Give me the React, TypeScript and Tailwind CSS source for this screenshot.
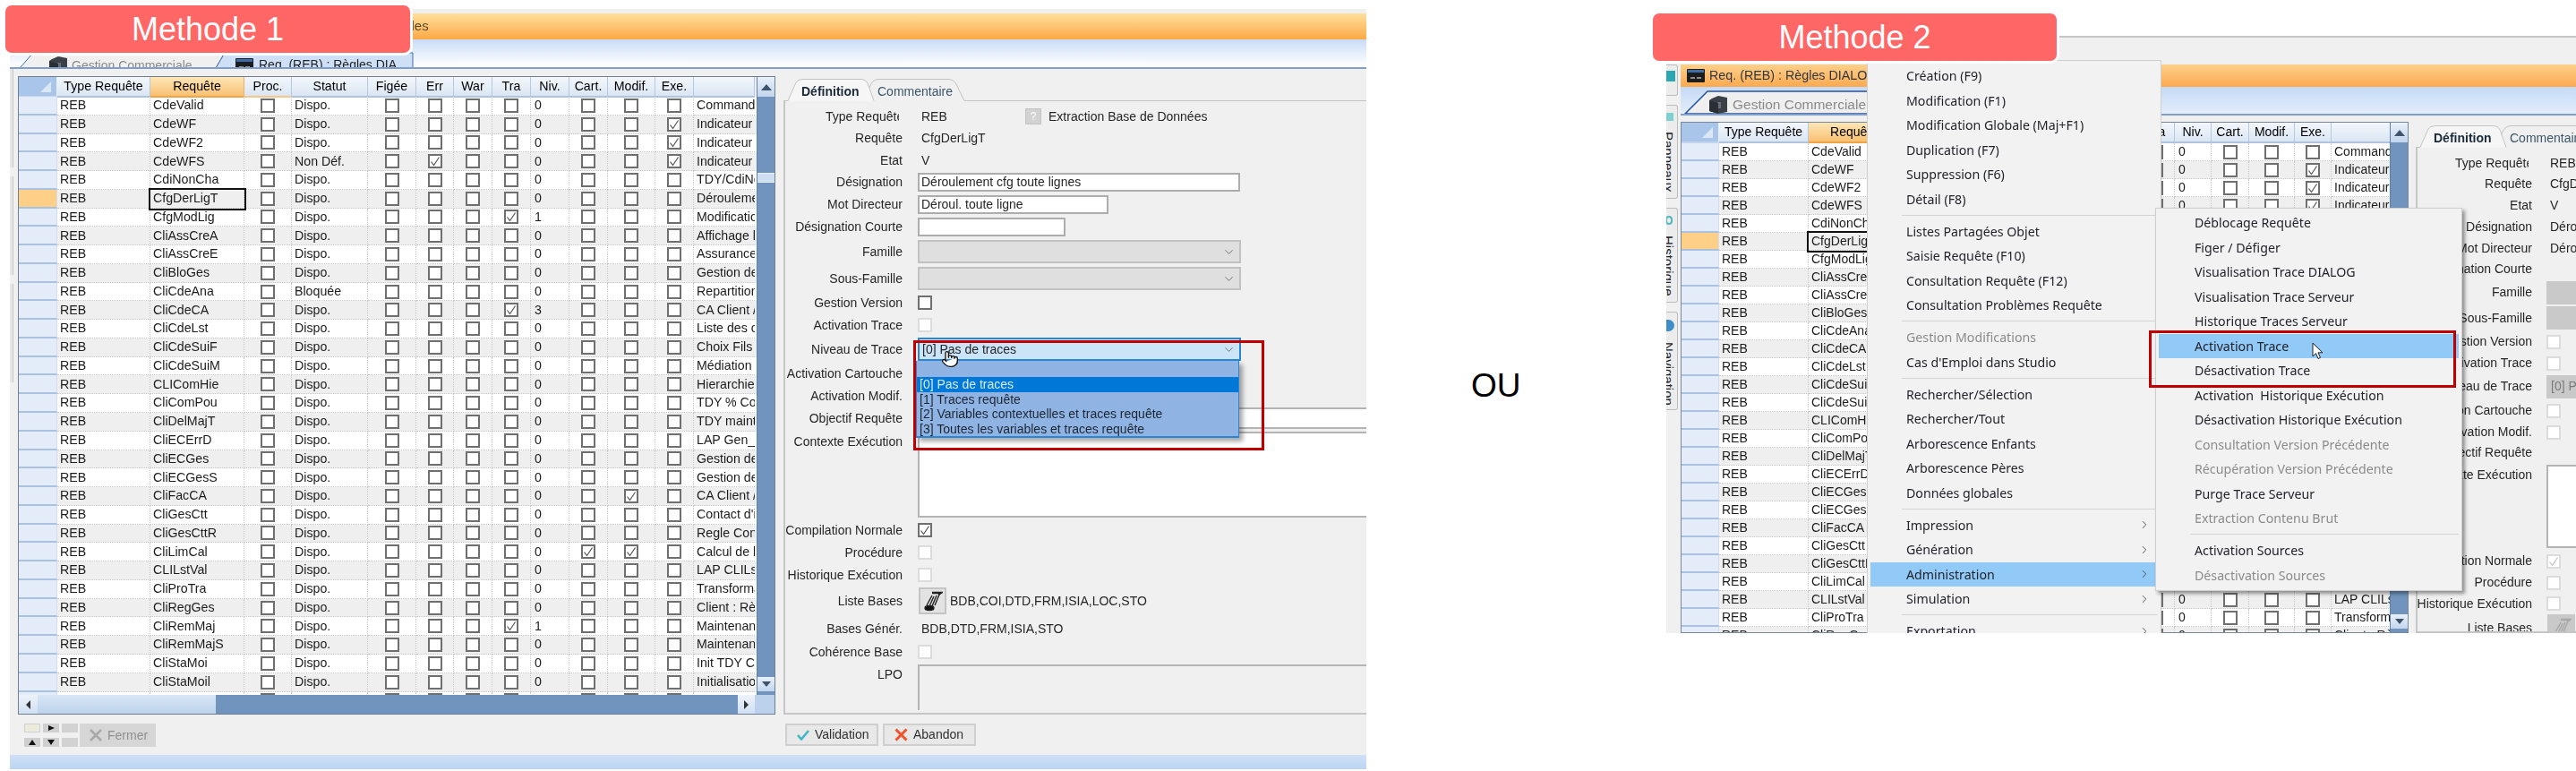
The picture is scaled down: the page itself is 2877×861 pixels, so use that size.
import React from "react";
import { ChevronDown, ChevronRight, Pointer } from "lucide-react";

const requetes = [
  ["CdeValid", "Commande"],
  ["CdeWF", "Indicateur"],
  ["CdeWF2", "Indicateur"],
  ["CdeWFS", "Indicateur"],
  ["CdiNonCha", "TDY/CdiNonCha"],
  ["CfgDerLigT", "Déroulement"],
  ["CfgModLig", "Modification"],
  ["CliAssCreA", "Affichage l"],
  ["CliAssCreE", "Assurance"],
  ["CliBloGes", "Gestion de"],
  ["CliCdeAna", "Repartition"],
  ["CliCdeCA", "CA Client /"],
  ["CliCdeLst", "Liste des c"],
  ["CliCdeSuiF", "Choix Fils l"],
  ["CliCdeSuiM", "Médiation"],
  ["CLIComHie", "Hierarchie"],
  ["CliComPou", "TDY % Co"],
  ["CliDelMajT", "TDY maint"],
  ["CliECErrD", "LAP Gen_"],
  ["CliECGes", "Gestion de"],
  ["CliECGesS", "Gestion de"],
  ["CliFacCA", "CA Client /"],
  ["CliGesCtt", "Contact d'i"],
  ["CliGesCttR", "Regle Con"],
  ["CliLimCal", "Calcul de l"],
  ["CLILstVal", "LAP CLILs"],
  ["CliProTra", "Transforma"],
  ["CliRegGes", "Client : Rè"],
  ["CliRemMaj", "Maintenan"],
  ["CliRemMajS", "Maintenan"],
  ["CliStaMoi", "Init TDY C"],
  ["CliStaMoil", "Initialisation"],
  ["", ""],
];

// flag columns ticked per request
const ticks: Record<string, string[]> = {
  CdeWF: ["exe"],
  CdeWF2: ["exe"],
  CdeWFS: ["err", "exe"],
  CfgModLig: ["tra"],
  CliCdeCA: ["tra"],
  CliFacCA: ["modif"],
  CliLimCal: ["cart", "modif"],
  CliRemMaj: ["tra"],
};
const niveaux: Record<string, string> = { CfgModLig: "1", CliCdeCA: "3", CliRemMaj: "1" };
const statuts: Record<string, string> = { CdeWFS: "Non Déf.", CliCdeAna: "Bloquée" };

const headers = ["Type Requête", "Requête", "Proc.", "Statut", "Figée", "Err", "War", "Tra", "Niv.", "Cart.", "Modif.", "Exe.", ""];

const cell = "border-r border-b border-dotted border-[#c9c9c9] overflow-hidden whitespace-nowrap flex items-center";

function Check({ on, faded }: { on?: boolean; faded?: boolean }) {
  return (
    <span className={`w-[16px] h-[16px] flex items-center justify-center bg-white border-2 shrink-0 ${faded ? "border-[#dcdcdc]" : "border-[#6f6f6f]"}`}>
      {on && (
        <svg width="12" height="12" viewBox="0 0 12 12" fill="none" stroke={faded ? "#c4c4c4" : "#555"} strokeWidth="1.2">
          <path d="M1.5 6.5 L4.5 10.5 L10.5 1.5" />
        </svg>
      )}
    </span>
  );
}

function CheckCell({ on }: { on?: boolean }) {
  return (
    <div className={`${cell} justify-center`}>
      <Check on={on} />
    </div>
  );
}

function VScroll({ thumb }: { thumb: string }) {
  return (
    <div className="w-[20px] bg-[#7094bd] flex flex-col border-l border-[#5c82ad]">
      <div className="h-[22px] bg-linear-to-b from-[#e8f0fa] to-[#c3d6ee] flex items-center justify-center">
        <div className="w-0 h-0 border-x-[6px] border-x-transparent border-b-[7px] border-b-[#3f536b]" />
      </div>
      <div className={`${thumb} h-[11px] bg-[#cfdff3] border-y border-[#e8f0fa]`} />
      <div className="flex-1" />
      <div className="h-[16px] mb-[4px] bg-linear-to-b from-[#e8f0fa] to-[#c3d6ee] flex items-center justify-center">
        <div className="w-0 h-0 border-x-[5px] border-x-transparent border-t-[6px] border-t-[#3f536b]" />
      </div>
    </div>
  );
}

function ReqGrid({ cols, rowH, headH, text, thumb }: { cols: string; rowH: string; headH: string; text: string; thumb: string }) {
  return (
    <div className="flex-1 min-h-0 flex overflow-hidden">
      <div className={`flex-1 min-w-0 overflow-hidden ${text}`}>
        <div className={`grid ${cols} ${headH}`}>
          <div className="bg-[#a9c6ea] border-r border-[#e6eef8] border-b-2 border-b-[#c3d5ec] flex items-end justify-end pr-[6px] pb-[4px]">
            <svg width="12" height="12" viewBox="0 0 12 12">
              <path d="M12 0 V12 H0 Z" fill="#dbe7f6" />
            </svg>
          </div>
          {headers.map((h, i) => (
            <div
              key={i}
              className={`flex items-center justify-center whitespace-nowrap border-r border-b-2 ${
                i === 1
                  ? "bg-linear-to-b from-[#fde6b6] to-[#f8c172] border-r-[#e7b36a] border-b-[#f0a445]"
                  : i === 2
                    ? "bg-linear-to-b from-[#f3f7fc] to-[#dbe6f3] border-r-[#b4c8df] border-b-[#f6c78a]"
                    : "bg-linear-to-b from-[#f3f7fc] to-[#dbe6f3] border-r-[#b4c8df] border-b-[#adc3de]"
              }`}
            >
              {h}
            </div>
          ))}
        </div>
        {requetes.map(([name, desc], i) => {
          const t = ticks[name] ?? [];
          const current = name === "CfgDerLigT";
          return (
            <div key={i} className={`grid ${cols} ${rowH} ${i % 2 ? "bg-[#efefef]" : "bg-white"} text-[#1c1c1c]`}>
              <div className={`border-r border-[#d3deec] border-b-2 border-b-[#a9c2df] ${current ? "bg-[#fdcf87]" : "bg-[#e3ecf8]"}`} />
              <div className={`${cell} pl-[3px]`}>{name && "REB"}</div>
              <div className={`${cell} pl-[3px] ${current ? "relative z-10 outline-2 outline-[#111] bg-transparent" : ""}`}>{name}</div>
              <CheckCell />
              <div className={`${cell} pl-[3px]`}>{name && (statuts[name] ?? "Dispo.")}</div>
              <CheckCell />
              <CheckCell on={t.includes("err")} />
              <CheckCell />
              <CheckCell on={t.includes("tra")} />
              <div className={`${cell} pl-[4px]`}>{name && (niveaux[name] ?? "0")}</div>
              <CheckCell on={t.includes("cart")} />
              <CheckCell on={t.includes("modif")} />
              <CheckCell on={t.includes("exe")} />
              <div className={`${cell} pl-[3px] border-r-0`}>{desc}</div>
            </div>
          );
        })}
      </div>
      <VScroll thumb={thumb} />
    </div>
  );
}

type FormRow = {
  label: string;
  kind: "text" | "input" | "combo" | "check" | "area" | "lpo" | "bases" | "type";
  value?: string;
  w?: string;
  on?: boolean;
  off?: boolean;
};

const formRows: FormRow[] = [
  { label: "Type Requête", kind: "type", value: "REB" },
  { label: "Requête", kind: "text", value: "CfgDerLigT" },
  { label: "Etat", kind: "text", value: "V" },
  { label: "Désignation", kind: "input", value: "Déroulement cfg toute lignes", w: "w-[360px]" },
  { label: "Mot Directeur", kind: "input", value: "Déroul. toute ligne", w: "w-[213px]" },
  { label: "Désignation Courte", kind: "input", value: "", w: "w-[165px]" },
  { label: "Famille", kind: "combo" },
  { label: "Sous-Famille", kind: "combo" },
  { label: "Gestion Version", kind: "check" },
  { label: "Activation Trace", kind: "check", off: true },
  { label: "Niveau de Trace", kind: "combo", value: "[0] Pas de traces", on: true },
  { label: "Activation Cartouche", kind: "check", off: true },
  { label: "Activation Modif.", kind: "check", off: true },
  { label: "Objectif Requête", kind: "area" },
  { label: "Contexte Exécution", kind: "area" },
  { label: "Compilation Normale", kind: "check", on: true },
  { label: "Procédure", kind: "check", off: true },
  { label: "Historique Exécution", kind: "check", off: true },
  { label: "Liste Bases", kind: "bases", value: "BDB,COI,DTD,FRM,ISIA,LOC,STO" },
  { label: "Bases Génér.", kind: "text", value: "BDB,DTD,FRM,ISIA,STO" },
  { label: "Cohérence Base", kind: "check", off: true },
  { label: "LPO", kind: "lpo" },
];

const editHeights = ["h-[24px]", "h-[25px]", "h-[24px]", "h-[25px]", "h-[25px]", "h-[25px]", "h-[30px]", "h-[30px]", "h-[24px]", "h-[26px]", "h-[28px]", "h-[26px]", "h-[24px]", "h-[26px]", "h-[100px]", "h-[24px]", "h-[26px]", "h-[24px]", "h-[34px]", "h-[28px]", "h-[24px]", "h-[55px]"];
const viewHeights = ["h-[24px]", "h-[23px]", "h-[24px]", "h-[24px]", "h-[24px]", "h-[23px]", "h-[29px]", "h-[28px]", "h-[25px]", "h-[23px]", "h-[29px]", "h-[25px]", "h-[23px]", "h-[23px]", "h-[97px]", "h-[25px]", "h-[23px]", "h-[24px]", "h-[30px]", "h-[28px]", "h-[24px]", "h-[55px]"];

function BaseIcon({ faded }: { faded?: boolean }) {
  return (
    <svg width="22" height="24" viewBox="0 0 22 24" fill="none" stroke={faded ? "#9a9a9a" : "#222"} strokeWidth="1.4" className={faded ? "opacity-70" : ""}>
      <path d="M10 3 H20 L17 5" strokeWidth="2.4" />
      <path d="M4 17 L10 6 M7 18 L12 7 M10 18 L15 6 M13 17 L18 5" />
      <ellipse cx="7" cy="20" rx="5" ry="2.6" fill={faded ? "#9a9a9a" : "#111"} />
    </svg>
  );
}

function Field({ row, view }: { row: FormRow; view?: boolean }) {
  const ok = !view;
  switch (row.kind) {
    case "type":
      return (
        <div className="flex items-center w-full pl-[4px]">
          <span className="w-[116px]">{row.value}</span>
          {ok && (
            <>
              <span className="w-[18px] h-[18px] bg-[#d2d2d2] border border-[#c4c4c4] text-white text-center text-[12px] leading-[16px] mr-[8px]">?</span>
              <span className="whitespace-nowrap">Extraction Base de Données</span>
            </>
          )}
        </div>
      );
    case "text":
      return <span className="pl-[4px] whitespace-nowrap">{row.value}</span>;
    case "input":
      return view ? (
        <span className="pl-[4px] whitespace-nowrap">{row.value}</span>
      ) : (
        <div className={`${row.w} h-[21px] bg-white border-2 border-[#adadad] flex items-center pl-[2px] whitespace-nowrap`}>{row.value}</div>
      );
    case "combo":
      if (view)
        return <div className="w-[360px] h-[26px] bg-[#c9c9c9] flex items-center pl-[5px] text-[#7a7a7a] whitespace-nowrap">{row.value}</div>;
      return (
        <div className={`w-[361px] h-[26px] border-2 flex items-center pl-[3px] whitespace-nowrap ${row.on ? "bg-[#cce4f7] border-[#2a86d4]" : "bg-[#dfdfdf] border-[#c2c2c2]"}`}>
          <span className="flex-1">{row.value}</span>
          <ChevronDown size={15} strokeWidth={1.5} className="mr-[4px] text-[#6a6a6a]" />
        </div>
      );
    case "check":
      return <Check on={row.on} faded={row.off || view} />;
    case "area":
      if (view && row.label !== "Contexte Exécution") return null;
      return <div className={`w-full bg-white border-2 border-r-0 border-[#b4b4b4] ${row.label === "Contexte Exécution" ? "h-full" : "h-[24px]"}`} />;
    case "lpo":
      return <div className="w-full h-full border-l-2 border-t-2 border-[#b4b4b4]" />;
    case "bases":
      return (
        <div className="flex items-center whitespace-nowrap">
          <div className={`w-[31px] h-[30px] ml-[1px] mr-[4px] flex items-center justify-center border-2 ${view ? "bg-[#c9c9c9] border-[#c9c9c9]" : "bg-[#e3e3e3] border-[#c4c4c4]"}`}>
            <BaseIcon faded={view} />
          </div>
          {ok && row.value}
        </div>
      );
  }
}

function DefPanel({ heights, labelW, gap, view }: { heights: string[]; labelW: string; gap: string; view?: boolean }) {
  return (
    <div className="flex-1 min-w-0 flex flex-col overflow-hidden">
      <div className="relative h-[25px] shrink-0">
        <svg className="absolute inset-0 w-[700px] h-[25px]" viewBox="0 0 700 25" fill="none">
          <path d="M0 24.5 H5 L14 4 Q16 0.5 22 0.5 H86 Q92 0.5 94 5 L101 24.5" fill="#f6f6f6" stroke="#c3c3c3" />
          <path d="M96 10 Q99 0.5 106 0.5 H184 Q190 0.5 193 6 L202 24.5 H700" stroke="#c3c3c3" fill="none" />
        </svg>
        <span className="absolute left-[20px] top-[4px] font-bold text-[#1b2a3a] whitespace-nowrap">Définition</span>
        <span className="absolute left-[105px] top-[4px] text-[#3b5568] whitespace-nowrap">Commentaire</span>
      </div>
      <div className="flex-1 min-h-0 border-l-2 border-b-2 border-[#c6c6c6] pt-[5px] overflow-hidden text-[#262626]">
        {formRows.map((row, i) => {
          const tall = row.kind === "lpo" || row.label === "Contexte Exécution";
          return (
            <div key={row.label} className={`flex ${heights[i]} ${tall ? "items-start" : "items-center"}`}>
              <div className={`${labelW} shrink-0 flex justify-end whitespace-nowrap ${tall ? "pt-[3px]" : ""}`}>
                {row.kind === "type" ? <span className="w-[82px] mr-[4px] overflow-hidden">{row.label}</span> : row.label}
              </div>
              <div className={`${gap} shrink-0`} />
              <div className={`flex-1 min-w-0 flex items-center ${tall ? "h-full py-[2px]" : ""}`}>
                <Field row={row} view={view} />
              </div>
            </div>
          );
        })}
      </div>
    </div>
  );
}

const menu1: (string | null | { t: string; off?: boolean; sub?: boolean; hot?: boolean })[] = [
  "Création (F9)",
  "Modification (F1)",
  "Modification Globale (Maj+F1)",
  "Duplication (F7)",
  "Suppression (F6)",
  "Détail (F8)",
  null,
  "Listes Partagées Objet",
  "Saisie Requête (F10)",
  "Consultation Requête (F12)",
  "Consultation Problèmes Requête",
  null,
  { t: "Gestion Modifications", off: true },
  "Cas d'Emploi dans Studio",
  null,
  "Rechercher/Sélection",
  "Rechercher/Tout",
  "Arborescence Enfants",
  "Arborescence Pères",
  "Données globales",
  null,
  { t: "Impression", sub: true },
  { t: "Génération", sub: true },
  { t: "Administration", sub: true, hot: true },
  { t: "Simulation", sub: true },
  null,
  { t: "Exportation", sub: true },
];

const menu2: typeof menu1 = [
  "Déblocage Requête",
  "Figer / Défiger",
  "Visualisation Trace DIALOG",
  "Visualisation Trace Serveur",
  "Historique Traces Serveur",
  { t: "Activation Trace", hot: true },
  "Désactivation Trace",
  "Activation  Historique Exécution",
  "Désactivation Historique Exécution",
  { t: "Consultation Version Précédente", off: true },
  { t: "Récupération Version Précédente", off: true },
  "Purge Trace Serveur",
  { t: "Extraction Contenu Brut", off: true },
  null,
  "Activation Sources",
  { t: "Désactivation Sources", off: true },
];

function MenuItems({ items }: { items: typeof menu1 }) {
  return (
    <>
      {items.map((it, i) => {
        if (it === null) return <div key={i} className="h-[8.5px] flex items-center ml-[38px] mr-[3px]"><div className="h-[1px] w-full bg-[#d4d4d4]" /></div>;
        const item = typeof it === "string" ? { t: it } : it;
        return (
          <div key={i} className={`h-[27.5px] mx-[3px] pl-[40px] pr-[8px] flex items-center justify-between whitespace-pre ${item.hot ? "bg-[#91c9f7]" : ""} ${item.off ? "text-[#8b8b8b]" : "text-[#23232b]"}`}>
            {item.t}
            {item.sub && <ChevronRight size={14} strokeWidth={1.5} className="text-[#444]" />}
          </div>
        );
      })}
    </>
  );
}

function AppIcon() {
  return (
    <svg width="20" height="15" viewBox="0 0 20 15" className="shrink-0">
      <rect width="20" height="15" rx="1" fill="#1d1d1d" />
      <rect x="1" y="1" width="18" height="3" fill="#3d6ea8" />
      <path d="M4 10 H9 M11 10 H16" stroke="#8f8f8f" strokeWidth="2" />
    </svg>
  );
}

function CubeIcon() {
  return (
    <svg width="20" height="22" viewBox="0 0 20 22" className="shrink-0">
      <path d="M3 4 L10 1 L20 3 V19 L10 21 L0 18 V6 Z" fill="#3a4048" />
      <path d="M9 8 H13 V15 H9 Z" fill="#6a7078" />
      <path d="M0 6 L10 9 V21 L0 18 Z" fill="#2a2f35" />
    </svg>
  );
}

function SmallBox({ tone, arrow }: { tone: string; arrow?: "r" | "u" | "d" }) {
  return (
    <div className={`w-[18px] h-[10px] ${tone} flex items-center justify-center`}>
      {arrow === "r" && <div className="w-0 h-0 border-y-[3px] border-y-transparent border-l-[7px] border-l-[#111]" />}
      {arrow === "u" && <div className="w-0 h-0 border-x-[4px] border-x-transparent border-b-[6px] border-b-[#111]" />}
      {arrow === "d" && <div className="w-0 h-0 border-x-[4px] border-x-transparent border-t-[6px] border-t-[#111]" />}
    </div>
  );
}

function Methode1() {
  return (
    <div className="relative w-[1515px] h-[849px] ml-[11px] mt-[10px] shrink-0">
      <div className="w-full h-full bg-[#f0f0f0] flex flex-col overflow-hidden blur-[0.5px]">
        <div className="h-[5px] shrink-0" />
        <div className="h-[29px] shrink-0 bg-linear-to-b from-[#fde09a] to-[#fca843] flex items-center pl-[421px] text-[15px] text-[#5a4a30]">Règles</div>
        <div className="relative h-[33px] shrink-0 bg-linear-to-b from-[#c8dbf6] via-[#e6effb] to-white border-b-2 border-[#7f9ec9] overflow-hidden">
          <svg className="absolute left-[8px] top-0 w-[460px] h-[33px]" viewBox="0 0 460 33" fill="none">
            <path d="M3 32 L18 15 H232 L222 32 Z" fill="#f0f0f0" stroke="#3f6fb0" />
            <path d="M222 32 L232 15 H442 V32 Z" fill="#cfe0f6" stroke="#3f6fb0" />
          </svg>
          <div className="absolute left-[44px] top-[18px] flex items-center gap-[5px] text-[#8a8a8a] text-[14px] whitespace-nowrap"><CubeIcon />Gestion Commerciale ...</div>
          <div className="absolute left-[252px] top-[18px] flex items-center gap-[6px] text-[#222] text-[14px] whitespace-nowrap"><AppIcon />Req. (REB) : Règles DIA...</div>
        </div>
        <div className="flex-1 min-h-0 flex">
          <div className="w-[9px] shrink-0 flex flex-col gap-[10px]">
            <div className="w-[4px] h-[110px] bg-[#e6e6e6] border-r border-[#c6c6c6]" />
            <div className="w-[4px] h-[110px] bg-[#e6e6e6] border-r border-[#c6c6c6]" />
            <div className="w-[4px] h-[110px] bg-[#e6e6e6] border-r border-[#c6c6c6]" />
          </div>
          <div className="w-[846px] shrink-0 pt-[8px] flex flex-col">
            <div className="h-[713px] shrink-0 border border-[#6f7f90] flex flex-col">
              <ReqGrid
                cols="grid-cols-[43px_104px_105px_53px_85px_54px_42px_43px_43px_43px_43px_53px_43px_68px]"
                rowH="h-[20.77px]"
                headH="h-[22px]"
                text="text-[14.2px]"
                thumb="mt-[85px]"
              />
              <div className="h-[21px] shrink-0 bg-[#7094bd] flex">
                <div className="w-[21px] bg-linear-to-b from-[#eef3fa] to-[#cfdff3] flex items-center justify-center">
                  <div className="w-0 h-0 border-y-[5px] border-y-transparent border-r-[5px] border-r-[#333]" />
                </div>
                <div className="w-[199px] bg-linear-to-b from-[#d9e6f6] to-[#bcd2ec]" />
                <div className="flex-1" />
                <div className="w-[19px] bg-linear-to-b from-[#eef3fa] to-[#cfdff3] flex items-center justify-center">
                  <div className="w-0 h-0 border-y-[5px] border-y-transparent border-l-[5px] border-l-[#333]" />
                </div>
                <div className="w-[22px] bg-[#bcd2ec]" />
              </div>
            </div>
            <div className="flex gap-[1px] pl-[7px] pt-[10px]">
              <div className="grid grid-cols-3 gap-x-[3px] gap-y-[6px] w-[60px]">
                <SmallBox tone="bg-[#ecebdc] border border-[#cfcfcf]" />
                <SmallBox tone="bg-[#cfcfcf]" arrow="r" />
                <SmallBox tone="bg-[#d2d2d2]" />
                <SmallBox tone="bg-[#cfcfcf]" arrow="u" />
                <SmallBox tone="bg-[#cfcfcf]" arrow="d" />
                <SmallBox tone="bg-[#d2d2d2]" />
              </div>
              <div className="ml-[1px] w-[85px] h-[26px] bg-[#d6d6d6] flex items-center gap-[6px] pl-[11px] text-[#8f8f8f] text-[14px]">
                <svg width="14" height="14" viewBox="0 0 14 14" stroke="#a9a9a9" strokeWidth="2.6"><path d="M1 1 L13 13 M13 1 L1 13" /></svg>
                Fermer
              </div>
            </div>
          </div>
          <div className="flex-1 min-w-0 ml-[9px] pt-[11px] flex flex-col text-[14px]">
            <div className="h-[710px] shrink-0 flex">
              <DefPanel heights={editHeights} labelW="w-[131px]" gap="w-[17px]" />
            </div>
            <div className="flex gap-[5px] pl-[2px] pt-[10px] text-[14px] text-[#303030]">
              <div className="w-[104px] h-[25px] bg-[#e8e8e8] border-2 border-[#cfcfcf] flex items-center gap-[6px] pl-[11px]">
                <svg width="14" height="12" viewBox="0 0 14 12" fill="none" stroke="#3fb7c4" strokeWidth="2.6"><path d="M1 6 L5 10.5 L13 1" /></svg>
                Validation
              </div>
              <div className="w-[104px] h-[25px] bg-[#e8e8e8] border-2 border-[#cfcfcf] flex items-center gap-[6px] pl-[11px]">
                <svg width="15" height="15" viewBox="0 0 15 15" stroke="#f0522b" strokeWidth="3"><path d="M1.5 1.5 L13.5 13.5 M13.5 1.5 L1.5 13.5" /></svg>
                Abandon
              </div>
            </div>
          </div>
        </div>
        <div className="h-[16px] shrink-0 bg-linear-to-b from-[#cfe0f6] to-[#bcd5f3]" />
      </div>

      <div className="absolute left-[1012px] top-[393px] w-[361px] h-[86px] bg-[#8fb3e3] border-x border-b-2 border-[#2a86d4] shadow-[4px_4px_5px_rgba(0,0,0,0.35)] text-[14px] text-[#1c2633] blur-[0.4px]">
        <div className="h-[18px]" />
        <div className="h-[17px] bg-[#0078d7] text-[#d7ecff] pl-[3px] flex items-center">[0] Pas de traces</div>
        <div className="h-[16.5px] pl-[3px] flex items-center">[1] Traces requête</div>
        <div className="h-[16.5px] pl-[3px] flex items-center">[2] Variables contextuelles et traces requête</div>
        <div className="h-[16.5px] pl-[3px] flex items-center">[3] Toutes les variables et traces requête</div>
      </div>
      <Pointer size={20} fill="white" stroke="#111" strokeWidth={1.6} className="absolute left-[1040px] top-[381px]" />
      <div className="absolute left-[1009px] top-[370px] w-[392px] h-[123px] border-[3px] border-[#c00000]" />
      <div className="absolute left-[-8px] top-[-7px] w-[458px] h-[59px] bg-[#ff6666] border-[3px] border-white rounded-[10px] flex items-center justify-center text-white text-[36px]">Methode 1</div>
    </div>
  );
}

function SideTab({ h, label, icon }: { h: string; label: string; icon: React.ReactNode }) {
  return (
    <div className={`${h} w-[13px] shrink-0 bg-[#ececec] border border-l-0 border-[#bdbdbd] rounded-r-[3px] overflow-hidden flex flex-col pt-[8px] gap-[12px]`}>
      {icon}
      <span className="self-start w-[15px] -ml-[5px] [writing-mode:vertical-rl] text-[15px] leading-[15px] text-[#222]">{label}</span>
    </div>
  );
}

function Methode2() {
  return (
    <div className="relative w-[1016px] h-[667px] mt-[40px] shrink-0">
      <div className="w-full h-full bg-[#f0f0f0] flex flex-col overflow-hidden relative">
        <div className="h-[32px] shrink-0 border-t-2 border-[#c6c6c6]" />
        <div className="flex-1 min-h-0 flex blur-[0.5px]">
          <div className="w-[16px] shrink-0 flex flex-col gap-[10px]">
            <div className="h-[35px] w-[13px] bg-[#ececec] border border-l-0 border-[#bdbdbd] rounded-r-[3px] pt-[6px]"><div className="w-[10px] h-[12px] bg-[#2aa7b0]" /></div>
            <SideTab h="h-[105px]" label="Panneaux" icon={<div className="w-[8px] h-[9px] bg-[#7fd0d2]" />} />
            <SideTab h="h-[106px]" label="Historique" icon={<div className="w-[8px] h-[10px] -ml-[1px] rounded-full border-2 border-[#4fb9bd]" />} />
            <SideTab h="h-[110px]" label="Navigation" icon={<div className="w-[9px] h-[13px] rounded-r-full bg-[#3f8dc9]" />} />
          </div>
          <div className="flex-1 min-w-0 flex flex-col">
            <div className="h-[25px] shrink-0 bg-linear-to-b from-[#fcd08a] to-[#fca94e] flex items-center gap-[5px] pl-[7px] text-[14.3px] text-[#2f3742]">
              <AppIcon />Req. (REB) : Règles DIALOG
            </div>
            <div className="relative h-[32px] shrink-0 bg-linear-to-b from-[#c5daf6] to-[#e3edfa] border-b-2 border-[#7f9ec9] overflow-hidden">
              <svg className="absolute left-[4px] top-0 w-[400px] h-[32px]" viewBox="0 0 400 32" fill="none">
                <path d="M1 30 L26 5 H400 V30 Z" fill="#efefef" stroke="#2352a6" strokeWidth="1.5" />
              </svg>
              <div className="absolute left-[32px] top-[8px] flex items-center gap-[6px] text-[#8a8a8a] text-[15.5px] whitespace-nowrap"><CubeIcon />Gestion Commerciale .</div>
            </div>
            <div className="flex-1 min-h-0 flex pt-[7px]">
              <div className="w-[813px] shrink-0 border border-[#7b8895] flex flex-col">
                <ReqGrid
                  cols="grid-cols-[42px_100px_102px_51px_82px_51px_41px_41px_41px_41px_42px_51px_41px_66px]"
                  rowH="h-[20px]"
                  headH="h-[23px]"
                  text="text-[14px]"
                  thumb="mt-[78px]"
                />
              </div>
              <div className="w-[187px] shrink-0 pl-[8px] pt-[4px] flex flex-col text-[14px]">
                <DefPanel heights={viewHeights} labelW="w-[128px]" gap="w-[16px]" view />
              </div>
            </div>
          </div>
        </div>

        <div className="absolute left-[224px] top-[27px] w-[329px] h-[700px] bg-[#f2f2f2] border border-[#cfcfcf] pt-[3px] font-['Noto_Sans',sans-serif] text-[14.2px] blur-[0.4px]">
          <MenuItems items={menu1} />
        </div>
        <div className="absolute left-[546px] top-[192px] w-[343px] h-[428px] bg-[#f2f2f2] border border-[#cfcfcf] pt-[2px] font-['Noto_Sans',sans-serif] text-[14.2px] shadow-[3px_3px_4px_rgba(0,0,0,0.4)] blur-[0.4px]">
          <MenuItems items={menu2} />
        </div>
        <svg className="absolute left-[721px] top-[342px]" width="14" height="20" viewBox="0 0 14 20" fill="white" stroke="#222" strokeWidth="1">
          <path d="M1 1 V16 L4.5 12.6 L7 18.5 L9.5 17.4 L7 11.8 H12 Z" />
        </svg>
        <div className="absolute left-[539px] top-[329px] w-[343px] h-[64px] border-[3px] border-[#c00000]" />
      </div>
      <div className="absolute left-[-18px] top-[-28px] w-[457px] h-[59px] bg-[#ff6666] border-[3px] border-white rounded-[10px] flex items-center justify-center text-white text-[36px]">Methode 2</div>
    </div>
  );
}

export default function App() {
  return (
    <div className="w-[2877px] h-[861px] bg-white overflow-hidden flex items-start font-['Liberation_Sans',Arial,sans-serif]">
      <Methode1 />
      <div className="w-[335px] shrink-0 pt-[403px] pl-[117px] text-[37px] text-black">OU</div>
      <Methode2 />
    </div>
  );
}
